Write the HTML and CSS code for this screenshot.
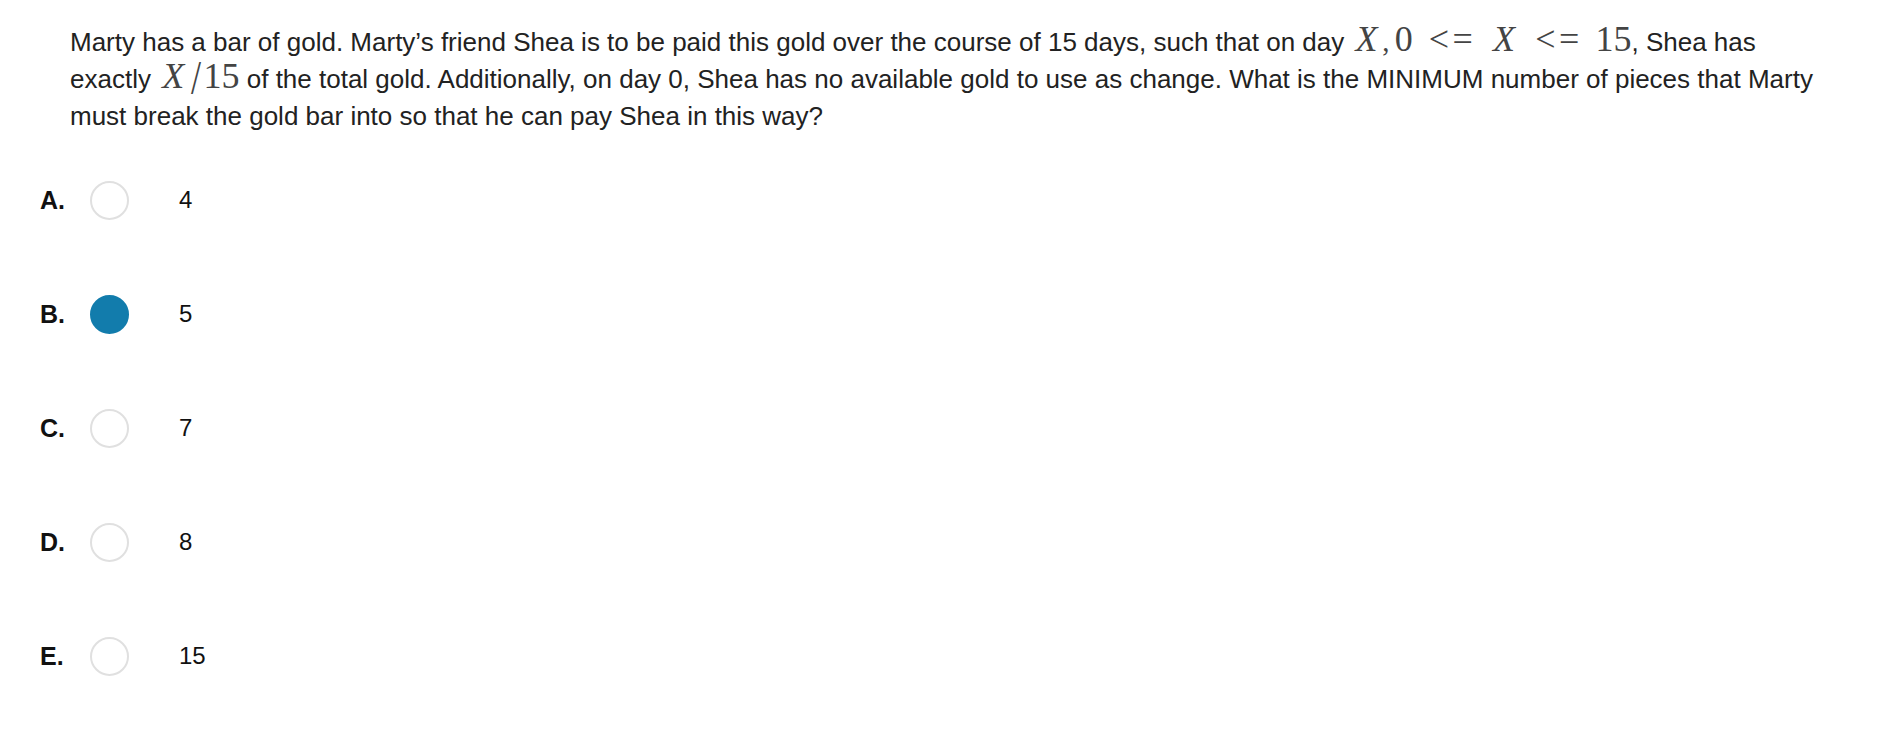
FILE: index.html
```html
<!DOCTYPE html>
<html>
<head>
<meta charset="utf-8">
<link rel="stylesheet" href="styles.css">
</head>
<body>
<div class="question">
  <p class="prompt">Marty has a bar of gold. Marty’s friend Shea is to be paid this gold over the course of 15 days, such that on day <span class="math"><span class="mi">X</span><span class="mp">,</span><span class="mn">0</span><span class="mo rel-l">&lt;</span><span class="mo rel-r">=</span><span class="mi">X</span><span class="mo rel-l">&lt;</span><span class="mo rel-r">=</span><span class="mn">15</span></span>, Shea has exactly <span class="math"><span class="mi">X</span><span class="slash">/</span><span class="mn">15</span></span> of the total gold. Additionally, on day 0, Shea has no available gold to use as change. What is the MINIMUM number of pieces that Marty must break the gold bar into so that he can pay Shea in this way?</p>
  <ul class="choices">
    <li class="choice"><span class="letter">A.</span><span class="radio"></span><span class="value">4</span></li>
    <li class="choice"><span class="letter">B.</span><span class="radio checked"></span><span class="value">5</span></li>
    <li class="choice"><span class="letter">C.</span><span class="radio"></span><span class="value">7</span></li>
    <li class="choice"><span class="letter">D.</span><span class="radio"></span><span class="value">8</span></li>
    <li class="choice"><span class="letter">E.</span><span class="radio"></span><span class="value">15</span></li>
  </ul>
</div>
</body>
</html>
```

FILE: styles.css
```css
html, body {
  margin: 0;
  padding: 0;
  background: #fff;
}
body {
  font-family: "Liberation Sans", Arial, sans-serif;
  color: #222;
}
.prompt {
  margin: 0;
  padding: 24px 66px 0 70px;
  font-size: 26px;
  line-height: 37px;
}
.math {
  font-family: "Liberation Serif", "Times New Roman", serif;
  font-size: 36px;
  color: #444;
  line-height: 0.8;
}
.math > span {
  display: inline-block;
  line-height: 0.8;
  text-align: center;
}
.mi {
  font-style: italic;
  width: 0.84em;
}
.mp {
  width: 0.28em;
  margin-right: 0.17em;
  font-size: 0.8em;
}
.mo {
  width: 0.66em;
}
.rel-l {
  margin-left: 0.4em;
}
.rel-r {
  margin-right: 0.4em;
}
.slash {
  width: 0.42em;
  transform: scaleY(1.35) translateY(0.04em);
}
.choices {
  list-style: none;
  margin: 0;
  padding: 8px 0 0 40px;
}
.choice {
  display: flex;
  align-items: center;
  height: 114px;
}
.letter {
  width: 50px;
  font-weight: bold;
  font-size: 25px;
  color: #111;
}
.radio {
  box-sizing: border-box;
  width: 39px;
  height: 39px;
  border: 2px solid #e0e0e0;
  border-radius: 50%;
  margin-right: 50px;
}
.radio.checked {
  background: #127cac;
  border-color: #127cac;
}
.value {
  font-size: 24px;
  color: #111;
}
```
